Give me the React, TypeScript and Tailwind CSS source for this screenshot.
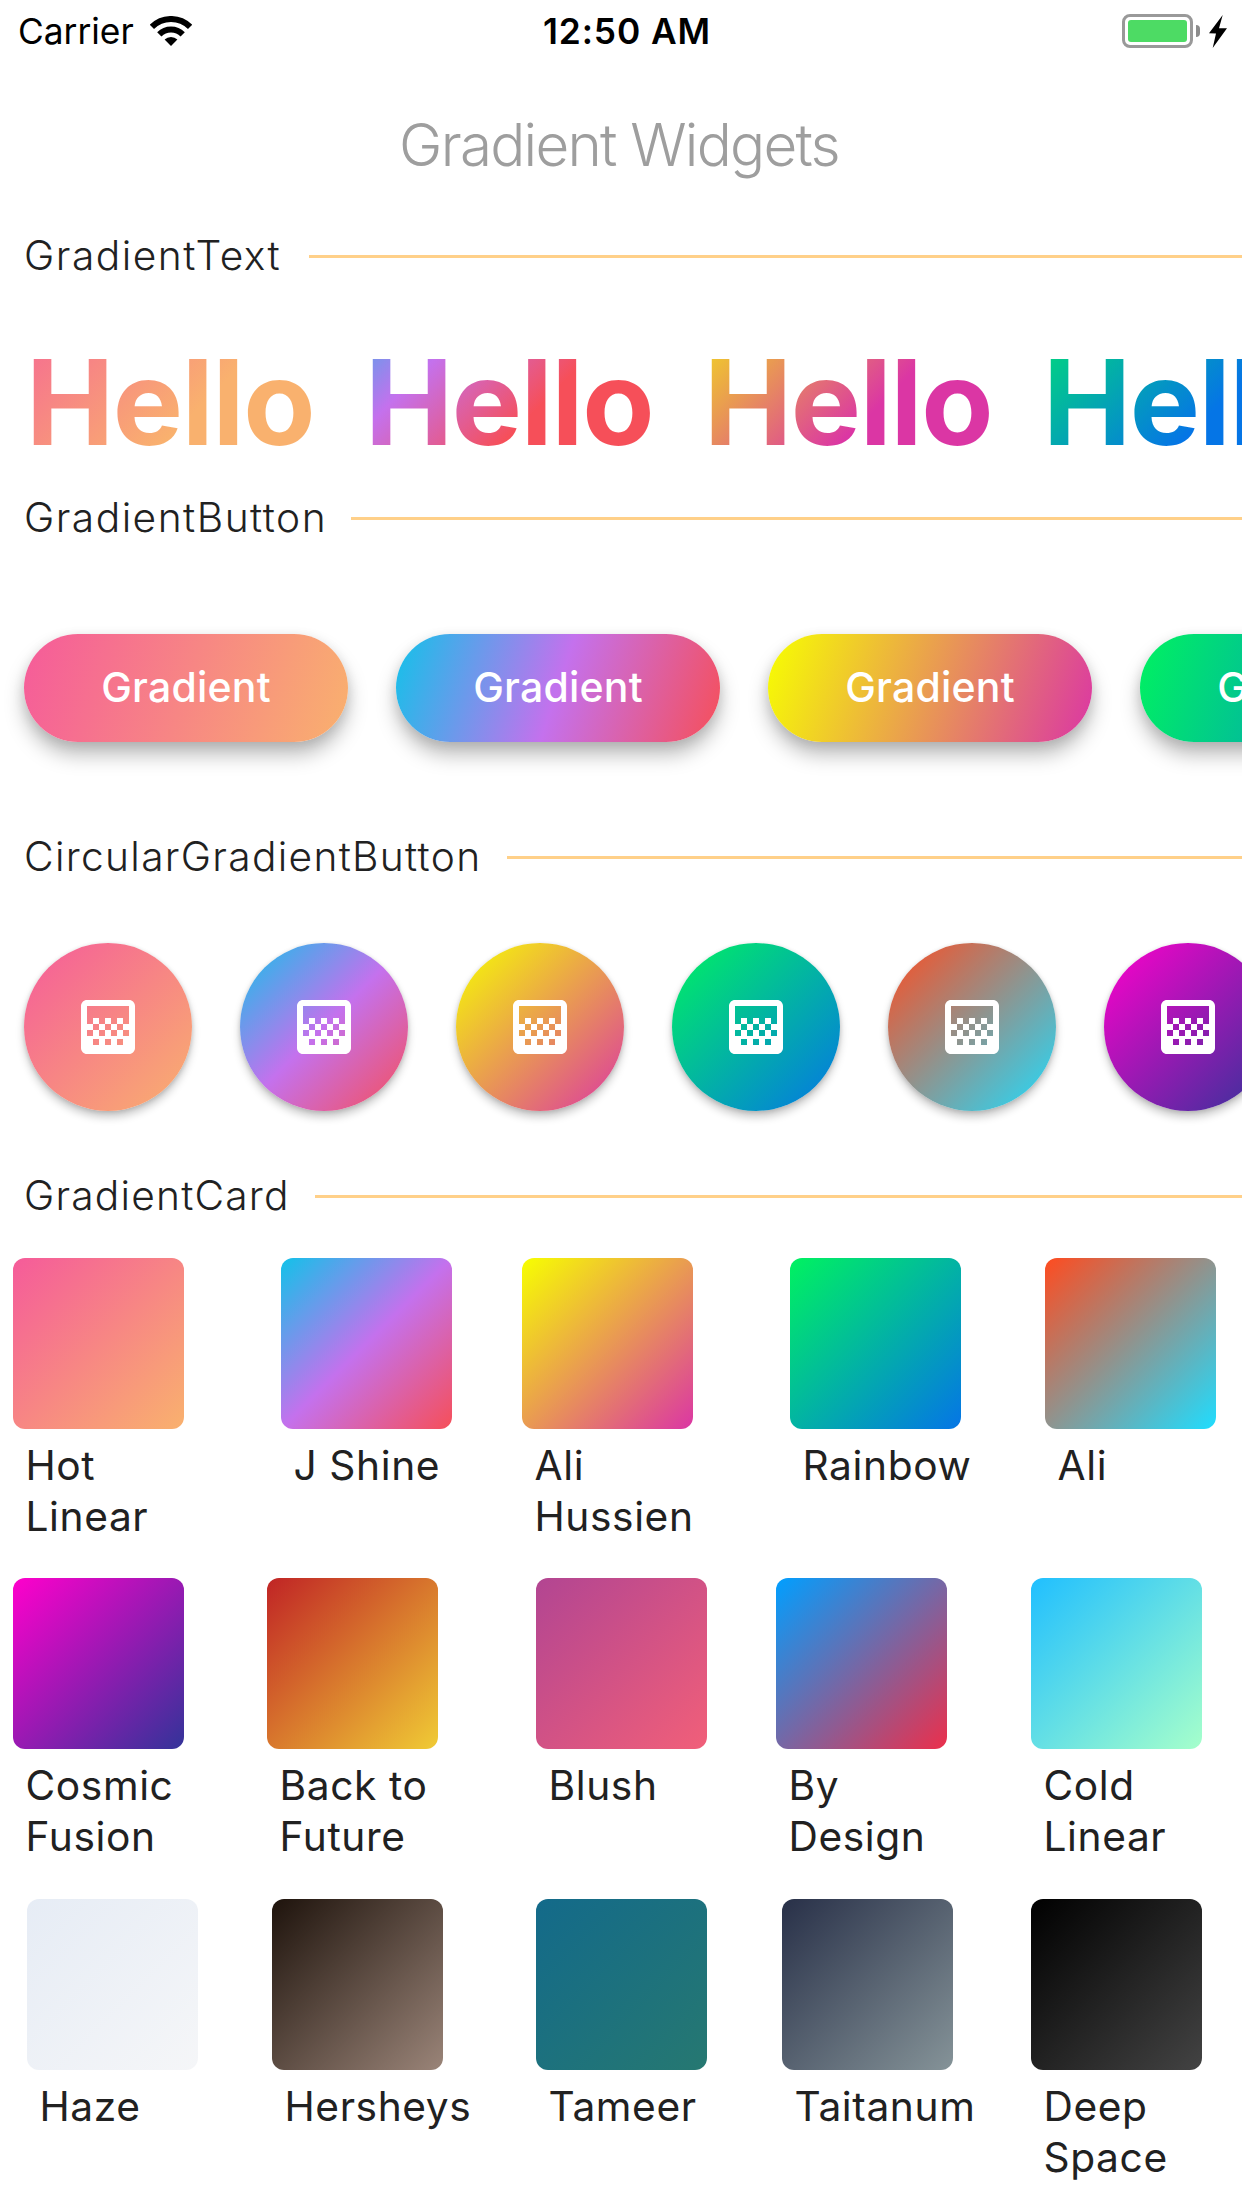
import { MdGradient } from 'react-icons/md';

const sections = {
  text: { title: 'GradientText', size: 'w-[285px] tracking-[1.5px]' },
  button: { title: 'GradientButton', size: 'w-[327px] tracking-[1.48px]' },
  circular: { title: 'CircularGradientButton', size: 'w-[483px] tracking-[1.31px]' },
  card: { title: 'GradientCard', size: 'w-[291px] tracking-[1.2px]' },
};

const helloGradients = [
  'bg-[linear-gradient(135deg,#f55b9a_-40px,#f9b16e_176px)]',
  'bg-[linear-gradient(135deg,#12c2e9_-40px,#c471ed_68px,#f64f59_176px)]',
  'bg-[linear-gradient(135deg,#f7ff00_-40px,#db36a4_176px)]',
  'bg-[linear-gradient(135deg,#00f260_-40px,#0575e6_176px)]',
];

const buttonGradients = [
  'bg-[linear-gradient(108.43deg,#f55b9a,#f9b16e)]',
  'bg-[linear-gradient(108.43deg,#12c2e9,#c471ed,#f64f59)]',
  'bg-[linear-gradient(108.43deg,#f7ff00,#db36a4)]',
  'bg-[linear-gradient(108.43deg,#00f260,#0575e6)]',
];

const circleGradients = [
  'bg-[linear-gradient(135deg,#f55b9a,#f9b16e)]',
  'bg-[linear-gradient(135deg,#12c2e9,#c471ed,#f64f59)]',
  'bg-[linear-gradient(135deg,#f7ff00,#db36a4)]',
  'bg-[linear-gradient(135deg,#00f260,#0575e6)]',
  'bg-[linear-gradient(135deg,#ff4b1f,#1fddff)]',
  'bg-[linear-gradient(135deg,#ff00cc,#333399)]',
];

type Card = { lines: string[]; fill: string; offset: string };

const cardRows: { height: string; cards: Card[] }[] = [
  {
    height: 'h-[320px]',
    cards: [
      { lines: ['Hot', 'Linear'], fill: 'bg-[linear-gradient(135deg,#f55b9a,#f9b16e)]', offset: 'ml-[13px]' },
      { lines: ['J Shine'], fill: 'bg-[linear-gradient(135deg,#12c2e9,#c471ed,#f64f59)]', offset: 'ml-[97px]' },
      { lines: ['Ali', 'Hussien'], fill: 'bg-[linear-gradient(135deg,#f7ff00,#db36a4)]', offset: 'ml-[70px]' },
      { lines: ['Rainbow'], fill: 'bg-[linear-gradient(135deg,#00f260,#0575e6)]', offset: 'ml-[97px]' },
      { lines: ['Ali'], fill: 'bg-[linear-gradient(135deg,#ff4b1f,#1fddff)]', offset: 'ml-[84px]' },
    ],
  },
  {
    height: 'h-[321px]',
    cards: [
      { lines: ['Cosmic', 'Fusion'], fill: 'bg-[linear-gradient(135deg,#ff00cc,#333399)]', offset: 'ml-[13px]' },
      { lines: ['Back to', 'Future'], fill: 'bg-[linear-gradient(135deg,#c02425,#f0cb35)]', offset: 'ml-[83px]' },
      { lines: ['Blush'], fill: 'bg-[linear-gradient(135deg,#b24592,#f15f79)]', offset: 'ml-[98px]' },
      { lines: ['By', 'Design'], fill: 'bg-[linear-gradient(135deg,#009fff,#ec2f4b)]', offset: 'ml-[69px]' },
      { lines: ['Cold', 'Linear'], fill: 'bg-[linear-gradient(135deg,#20bfff,#a6ffcb)]', offset: 'ml-[84px]' },
    ],
  },
  {
    height: 'h-[309px]',
    cards: [
      { lines: ['Haze'], fill: 'bg-[linear-gradient(135deg,#e6ecf5,#f5f6f8)]', offset: 'ml-[27px]' },
      { lines: ['Hersheys'], fill: 'bg-[linear-gradient(135deg,#1e130c,#9a8478)]', offset: 'ml-[74px]' },
      { lines: ['Tameer'], fill: 'bg-[linear-gradient(135deg,#136a8a,#267871)]', offset: 'ml-[93px]' },
      { lines: ['Taitanum'], fill: 'bg-[linear-gradient(135deg,#283048,#859398)]', offset: 'ml-[75px]' },
      { lines: ['Deep', 'Space'], fill: 'bg-[linear-gradient(135deg,#000000,#434343)]', offset: 'ml-[78px]' },
    ],
  },
];

function WifiIcon() {
  return (
    <svg className="mb-[2px] h-[30px] w-[42px]" viewBox="-21 -30 42 30" fill="none" stroke="#000">
      <path d="M-19.1-19.1A27 27 0 0 1 19.1-19.1" strokeWidth="6" />
      <path d="M-11.7-11.7A16.5 16.5 0 0 1 11.7-11.7" strokeWidth="6" />
      <path d="M0 0-6.4-6.4A9 9 0 0 1 6.4-6.4Z" fill="#000" stroke="none" />
    </svg>
  );
}

function BatteryIcon() {
  return (
    <div className="flex items-center pb-[2px]">
      <div className="h-[34px] w-[71px] rounded-[8px] border-[3px] border-[#999] p-[3px]">
        <div className="h-full w-full rounded-[3px] bg-[#4ddb64]" />
      </div>
      <div className="ml-[3px] h-[12px] w-[4px] rounded-r-full bg-[#8c8c8c]" />
      <svg className="ml-[9px] h-[33px] w-[18px]" viewBox="0 0 18 33" fill="#000">
        <path d="M13.7 0 0 18.2 7 18.4 3.7 33 18 13.2 10 13.2Z" />
      </svg>
    </div>
  );
}

function StatusBar() {
  return (
    <div className="grid h-[62px] shrink-0 grid-cols-[543px_1fr_auto] items-center pt-[2px] text-[35.3px] leading-none text-black">
      <div className="flex items-center pl-[18px]">
        <span className="w-[132px]">Carrier</span>
        <WifiIcon />
      </div>
      <span className="font-semibold tracking-[0.9px]">12:50 AM</span>
      <div className="pr-[15px]">
        <BatteryIcon />
      </div>
    </div>
  );
}

function SectionHeader({ title, size }: { title: string; size: string }) {
  return (
    <div className="flex h-[63px] shrink-0 items-center pl-6">
      <h2 className={'shrink-0 text-[40.7px] leading-none font-light text-[#212121] ' + size}>{title}</h2>
      <div className="h-[3px] flex-1 bg-[#ffd089]" />
    </div>
  );
}

function GradientCard({ lines, fill, offset }: Card) {
  return (
    <div className={'w-[171px] shrink-0 ' + offset}>
      <div className={'h-[171px] rounded-[12px] ' + fill} />
      <p className="pt-[11px] pl-[12.5px] text-[40.7px] leading-[51px] tracking-[0.6px] whitespace-nowrap text-[#212121]">
        {lines.map((line) => (
          <span key={line} className="block">
            {line}
          </span>
        ))}
      </p>
    </div>
  );
}

export default function App() {
  return (
    <div className="flex h-[2208px] w-[1242px] flex-col overflow-hidden bg-white font-['Inter',sans-serif]">
      <StatusBar />
      <h1 className="flex h-[163px] shrink-0 items-center justify-center pt-[3px] pr-[4px] text-[58.3px] leading-none font-light tracking-[-1.75px] text-[#9e9e9e]">
        Gradient Widgets
      </h1>

      <SectionHeader {...sections.text} />
      <div className="flex h-[199px] shrink-0 gap-[52px] overflow-hidden pt-[44px] pl-[26px]">
        {helloGradients.map((gradient) => (
          <span
            key={gradient}
            className={'h-[140px] w-[287px] shrink-0 bg-clip-text text-[118px] leading-[140px] font-bold tracking-[-1.3px] text-transparent ' + gradient}
          >
            Hello
          </span>
        ))}
      </div>

      <SectionHeader {...sections.button} />
      <div className="flex h-[276px] shrink-0 gap-12 overflow-hidden pt-[84px] pl-6">
        {buttonGradients.map((gradient) => (
          <button
            key={gradient}
            className={'h-[108px] w-[324px] shrink-0 rounded-full pb-[2px] text-[41px] leading-none font-medium tracking-[0.2px] text-white shadow-[0_3px_12px_rgba(0,0,0,0.10),0_13px_20px_rgba(0,0,0,0.26)] ' + gradient}
          >
            Gradient
          </button>
        ))}
      </div>

      <SectionHeader {...sections.circular} />
      <div className="flex h-[276px] shrink-0 gap-12 overflow-hidden pt-[54px] pl-6">
        {circleGradients.map((gradient) => (
          <button
            key={gradient}
            className={'flex h-[168px] w-[168px] shrink-0 items-center justify-center rounded-full shadow-[0_1px_4px_rgba(0,0,0,0.14),0_6px_8px_rgba(0,0,0,0.22)] ' + gradient}
          >
            <MdGradient className="h-[72px] w-[72px] text-white" />
          </button>
        ))}
      </div>

      <SectionHeader {...sections.card} />
      <div className="pt-[30px]">
        {cardRows.map((row) => (
          <div key={row.height} className={'flex items-start ' + row.height}>
            {row.cards.map((card) => (
              <GradientCard key={card.fill} {...card} />
            ))}
          </div>
        ))}
      </div>
    </div>
  );
}
